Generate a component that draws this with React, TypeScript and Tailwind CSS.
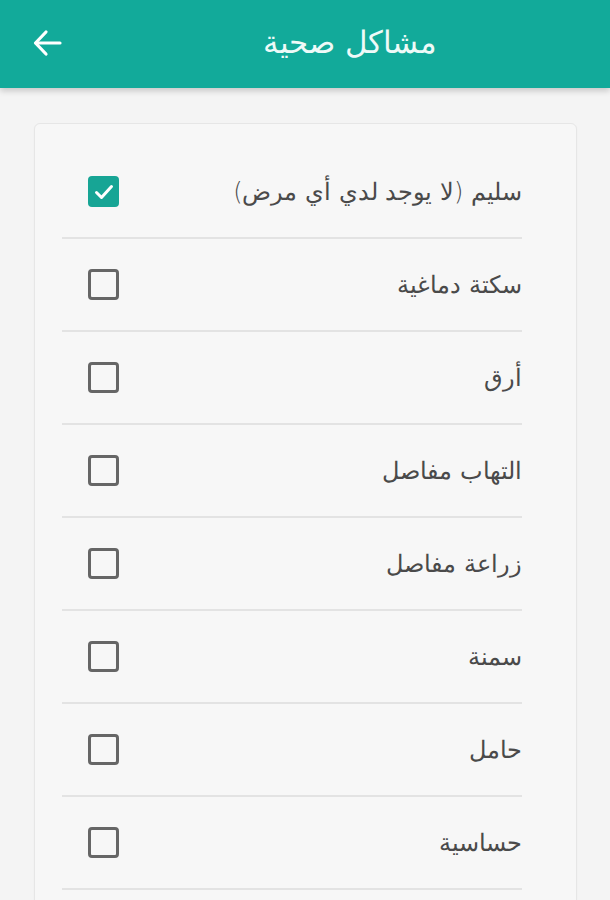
import React from "react";

const items = [
  { label: "سليم (لا يوجد لدي أي مرض)", checked: true },
  { label: "سكتة دماغية", checked: false },
  { label: "أرق", checked: false },
  { label: "التهاب مفاصل", checked: false },
  { label: "زراعة مفاصل", checked: false },
  { label: "سمنة", checked: false },
  { label: "حامل", checked: false },
  { label: "حساسية", checked: false },
];

export default function App() {
  return (
    <div
      className="w-[610px] h-[900px] overflow-hidden bg-[#f4f4f4] relative"
      style={{ fontFamily: '"DejaVu Sans", "Noto Sans", sans-serif' }}
    >
      <div className="h-[88px] bg-[#12aa9a] flex items-center relative shadow-[0_3px_6px_rgba(0,0,0,0.18)] z-10">
        <svg
          className="absolute left-[32px] top-[29px]"
          width="32"
          height="28"
          viewBox="0 0 32 28"
          fill="none"
          stroke="white"
          strokeWidth="3.2"
          strokeLinecap="round"
          strokeLinejoin="round"
        >
          <path d="M28 14H4" />
          <path d="M14 3L3.5 14L14 25" />
        </svg>
        <div dir="rtl" className="absolute left-[240px] w-[220px] text-center text-[#eefaf8] text-[31px] font-light top-[22px] leading-[40px]">
          مشاكل صحية
        </div>
      </div>
      <div className="pt-[35px] pl-[34px] pr-[33px]">
        <div className="bg-[#f7f7f7] border border-[#e6e6e6] rounded-[6px] pl-[27px] pr-[54px] pt-[22px] pb-[60px] shadow-[0_1px_2px_rgba(0,0,0,0.04)]">
          {items.map((it, i) => (
            <div
              key={i}
              dir="rtl"
              className="h-[93px] flex items-center justify-between border-b-2 border-[#e3e3e3] pl-[26px]"
            >
              <span className="text-[24px] font-light text-[#4a4a4a] leading-[30px]">{it.label}</span>
              {it.checked ? (
                <div className="w-[31px] h-[31px] rounded-[4px] bg-[#17a595] flex items-center justify-center">
                  <svg width="24" height="24" viewBox="0 0 24 24" fill="none" stroke="white" strokeWidth="3" strokeLinecap="round" strokeLinejoin="round">
                    <path d="M4.5 12.5L9.5 17.5L19.5 6.5" />
                  </svg>
                </div>
              ) : (
                <div className="w-[31px] h-[31px] rounded-[4px] border-[3px] border-[#666]" />
              )}
            </div>
          ))}
        </div>
      </div>
    </div>
  );
}
